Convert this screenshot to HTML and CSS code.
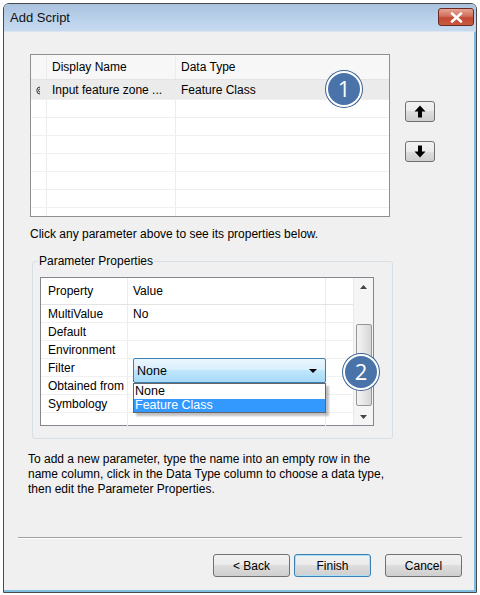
FILE: index.html
```html
<!DOCTYPE html>
<html>
  <head>
    <link rel="stylesheet" href="styles.css">
  </head>

  <body>

    <div class="window">
      <div class="titlebar">
        <span class="title">Add Script</span>
        <button class="close">
          <svg width="13" height="11" viewBox="0 0 13 11"><path d="M2 1.5 L11 9.5 M11 1.5 L2 9.5" stroke="#fff" stroke-width="2.6" stroke-linecap="round"/></svg>
        </button>
      </div>

      <div class="client">
        <div class="top">
          <div class="list">
            <div class="lrow head"><div class="sel"></div><div class="c1">Display Name</div><div class="c2">Data Type</div></div>
            <div class="lrow active">
              <div class="sel">
                <svg class="cut" width="4" height="9" viewBox="0 0 4 9"><path d="M4 1 A3.2 3.5 0 0 0 4 8 M4 3 A1.5 1.5 0 0 0 4 6" fill="none" stroke="#333" stroke-width="1"/></svg>
              </div>
              <div class="c1">Input feature zone ...</div><div class="c2">Feature Class</div>
            </div>
            <div class="lrow"><div class="sel"></div><div class="c1"></div><div class="c2"></div></div>
            <div class="lrow"><div class="sel"></div><div class="c1"></div><div class="c2"></div></div>
            <div class="lrow"><div class="sel"></div><div class="c1"></div><div class="c2"></div></div>
            <div class="lrow"><div class="sel"></div><div class="c1"></div><div class="c2"></div></div>
            <div class="lrow"><div class="sel"></div><div class="c1"></div><div class="c2"></div></div>
            <div class="lrow"><div class="sel"></div><div class="c1"></div><div class="c2"></div></div>
            <div class="lrow"><div class="sel"></div><div class="c1"></div><div class="c2"></div></div>
          </div>
          <div class="movers">
            <button class="mv">
              <svg width="12" height="13" viewBox="0 0 12 13"><path d="M6 0.5 L11.5 6.5 L8 6.5 L8 12.5 L4 12.5 L4 6.5 L0.5 6.5 Z" fill="#000"/></svg>
            </button>
            <button class="mv">
              <svg width="12" height="13" viewBox="0 0 12 13"><path d="M6 12.5 L11.5 6.5 L8 6.5 L8 0.5 L4 0.5 L4 6.5 L0.5 6.5 Z" fill="#000"/></svg>
            </button>
          </div>
        </div>

        <p class="hint">Click any parameter above to see its properties below.</p>

        <fieldset class="group">
          <legend>Parameter Properties</legend>
          <div class="grid">
            <div class="cells">
              <div class="prow head"><div class="p1">Property</div><div class="p2">Value</div><div class="p3"></div></div>
              <div class="prow"><div class="p1">MultiValue</div><div class="p2">No</div><div class="p3"></div></div>
              <div class="prow"><div class="p1">Default</div><div class="p2"></div><div class="p3"></div></div>
              <div class="prow"><div class="p1">Environment</div><div class="p2"></div><div class="p3"></div></div>
              <div class="prow"><div class="p1">Filter</div><div class="p2"></div><div class="p3"></div></div>
              <div class="prow"><div class="p1">Obtained from</div><div class="p2"></div><div class="p3"></div></div>
              <div class="prow"><div class="p1">Symbology</div><div class="p2"></div><div class="p3"></div></div>
              <div class="prow"><div class="p1"></div><div class="p2"></div><div class="p3"></div></div>
            </div>
            <div class="scroll">
              <div class="arrow">
                <svg width="7" height="4" viewBox="0 0 7 4"><path d="M0 4 L3.5 0 L7 4 Z" fill="#444"/></svg>
              </div>
              <div class="track"><div class="thumb"></div></div>
              <div class="arrow">
                <svg width="7" height="4" viewBox="0 0 7 4"><path d="M0 0 L3.5 4 L7 0 Z" fill="#444"/></svg>
              </div>
            </div>

            <div class="combo">
              <span>None</span>
              <svg width="8" height="4" viewBox="0 0 8 4"><path d="M0 0 L4 4 L8 0 Z" fill="#000"/></svg>
            </div>
            <ul class="droplist">
              <li>None</li>
              <li class="hl">Feature Class</li>
            </ul>
          </div>
        </fieldset>

        <p class="note">To add a new parameter, type the name into an empty row in the name column, click in the Data Type column to choose a data type, then edit the Parameter Properties.</p>

        <div class="footer">
          <div class="sep"></div>
          <div class="buttons">
            <button class="btn">&lt; Back</button>
            <button class="btn default">Finish</button>
            <button class="btn cancel">Cancel</button>
          </div>
        </div>

        <span class="badge b1">1</span>
        <span class="badge b2">2</span>
      </div>
    </div>

  </body>

</html>
```

FILE: styles.css
```css
body {
  margin: 0;
  background: #fff;
  font-family: "Liberation Sans", Arial, sans-serif;
  font-size: 12px;
  color: #000;
}

.window {
  margin: 3px 0 0 3px;
  width: 474px;
  height: 590px;
  box-sizing: border-box;
  border: 1px solid #4a4a4a;
  border-radius: 6px 6px 0 0;
  display: flex;
  flex-direction: column;
  overflow: hidden;
}

.titlebar {
  height: 27px;
  flex: none;
  display: flex;
  align-items: flex-start;
  justify-content: space-between;
  background: linear-gradient(#a9c2de, #bcd3ec 60%, #c6daef);
}

.title {
  margin: 6px 0 0 6px;
  font-size: 13px;
  color: #111;
}

.close {
  margin: 4px 2px 0 0;
  width: 36px;
  height: 18px;
  padding: 0;
  border: 1px solid #6a2a22;
  border-radius: 3px;
  background: linear-gradient(#e8a494, #d0705c 45%, #c14a33 55%, #c85a3f);
  display: flex;
  align-items: center;
  justify-content: center;
}

.client {
  position: relative;
  flex: 1;
  background: #f0f0f0;
  border-top: 1px solid #dbe6f1;
  border-right: 2px solid #7fbde0;
  border-bottom: 2px solid #7fbde0;
}

/* top parameter list */
.top {
  display: flex;
  margin: 22px 0 0 26px;
}

.list {
  width: 360px;
  height: 163px;
  box-sizing: border-box;
  border: 1px solid #8e8f8f;
  background: #fff;
  overflow: hidden;
}

.lrow {
  display: flex;
  height: 18px;
  border-bottom: 1px solid #f0f0f0;
  box-sizing: border-box;
  line-height: 17px;
}

.lrow.head {
  height: 25px;
  line-height: 25px;
  background: #f7f7f7;
  border-bottom: 1px solid #e3e3e3;
}

.lrow.active {
  height: 20px;
  line-height: 20px;
  background: #ebebeb;
}

.sel {
  width: 15px;
  flex: none;
  border-right: 1px solid #ececec;
  overflow: hidden;
}

.cut {
  display: block;
  margin: 6px 0 0 5px;
}

.c1 {
  width: 129px;
  flex: none;
  padding-left: 5px;
  box-sizing: border-box;
  border-right: 1px solid #ececec;
  white-space: nowrap;
}

.c2 {
  flex: 1;
  padding-left: 5px;
  margin-right: 2px;
}

.movers {
  display: flex;
  flex-direction: column;
  gap: 19px;
  margin: 47px 0 0 15px;
}

.mv {
  width: 30px;
  height: 21px;
  padding: 0;
  border: 1px solid #707070;
  border-radius: 3px;
  background: linear-gradient(#f2f2f2, #ebebeb 50%, #dddddd 50%, #cfcfcf);
  display: flex;
  align-items: center;
  justify-content: center;
}

.hint {
  margin: 10px 0 0 26px;
  line-height: 14px;
}

/* parameter properties group */
.group {
  margin: 13px 0 0 28px;
  width: 361px;
  box-sizing: border-box;
  padding: 9px 0 12px 7px;
  border: 1px solid #d5dfe5;
  border-radius: 3px;
}

.group legend {
  padding: 0 1px;
  margin-left: -2px;
  line-height: 14px;
}

.grid {
  position: relative;
  width: 334px;
  height: 149px;
  box-sizing: border-box;
  border: 1px solid #828790;
  background: #fff;
  display: flex;
}

.cells {
  flex: 1;
}

.prow {
  display: flex;
  height: 18px;
  line-height: 18px;
  box-sizing: border-box;
  border-bottom: 1px solid #f0f0f0;
}

.prow.head {
  height: 27px;
  line-height: 27px;
  border-bottom: 1px solid #e3e3e3;
}

.p1 {
  width: 87px;
  flex: none;
  padding-left: 7px;
  box-sizing: border-box;
  border-right: 1px solid #ececec;
  white-space: nowrap;
}

.p2 {
  width: 198px;
  flex: none;
  padding-left: 5px;
  box-sizing: border-box;
  border-right: 1px solid #ececec;
}

.p3 {
  flex: 1;
}

.scroll {
  width: 19px;
  flex: none;
  background: #f5f5f5;
  border-left: 1px solid #e8e8e8;
  display: flex;
  flex-direction: column;
}

.arrow {
  height: 17px;
  display: flex;
  align-items: center;
  justify-content: center;
}

.track {
  flex: 1;
  padding: 29px 1px 0 2px;
}

.thumb {
  height: 80px;
  border: 1px solid #979797;
  border-radius: 2px;
  background: linear-gradient(90deg, #f3f3f3, #e6e6e6 50%, #d6d6d6);
}

.combo {
  position: absolute;
  left: 92px;
  top: 80px;
  width: 193px;
  height: 25px;
  box-sizing: border-box;
  border: 1px solid #3c7fb1;
  border-radius: 2px;
  background: linear-gradient(#eaf6fd, #d9f0fc 45%, #bee6fd 50%, #a7d9f5);
  display: flex;
  align-items: center;
  justify-content: space-between;
  padding: 0 8px 0 3px;
  font-size: 12.5px;
}

.droplist {
  position: absolute;
  left: 92px;
  top: 105px;
  width: 193px;
  margin: 0;
  padding: 1px 0 0;
  list-style: none;
  box-sizing: border-box;
  border: 1px solid #646464;
  background: #fff;
  box-shadow: 3px 3px 2px rgba(0, 0, 0, 0.25);
  font-size: 12.5px;
  line-height: 13px;
}

.droplist li {
  padding-left: 1px;
}

.droplist li.hl {
  background: #3399ff;
  color: #fff;
  margin-top: 1px;
}

.note {
  margin: 13px 0 0 24px;
  width: 360px;
  line-height: 15px;
}

.footer {
  margin-top: 40px;
}

.sep {
  margin: 0 12px 0 14px;
  border-top: 1px solid #a0a0a0;
  border-bottom: 1px solid #fff;
}

.buttons {
  display: flex;
  justify-content: flex-end;
  margin: 15px 12px 0 0;
}

.btn {
  width: 77px;
  height: 23px;
  margin-left: 4px;
  padding: 0;
  border: 1px solid #707070;
  border-radius: 3px;
  background: linear-gradient(#f2f2f2, #ebebeb 50%, #dddddd 50%, #cfcfcf);
  font-family: inherit;
  font-size: 12px;
  color: #000;
}

.btn.default {
  border-color: #3c7fb1;
  box-shadow: inset 0 0 0 1px #a8e1f8;
}

.btn.cancel {
  margin-left: 14px;
}

.badge {
  position: absolute;
  width: 36px;
  height: 36px;
  box-sizing: border-box;
  border: 2px solid #fff;
  border-radius: 50%;
  background: #4a74a9;
  box-shadow: 0 0 0 1px #3a5f8f;
  color: #fff;
  font-family: "Open Sans", sans-serif;
  font-size: 22px;
  line-height: 31px;
  text-align: center;
}

.b1 {
  left: 322px;
  top: 39px;
}

.b2 {
  left: 339px;
  top: 322px;
}
```
